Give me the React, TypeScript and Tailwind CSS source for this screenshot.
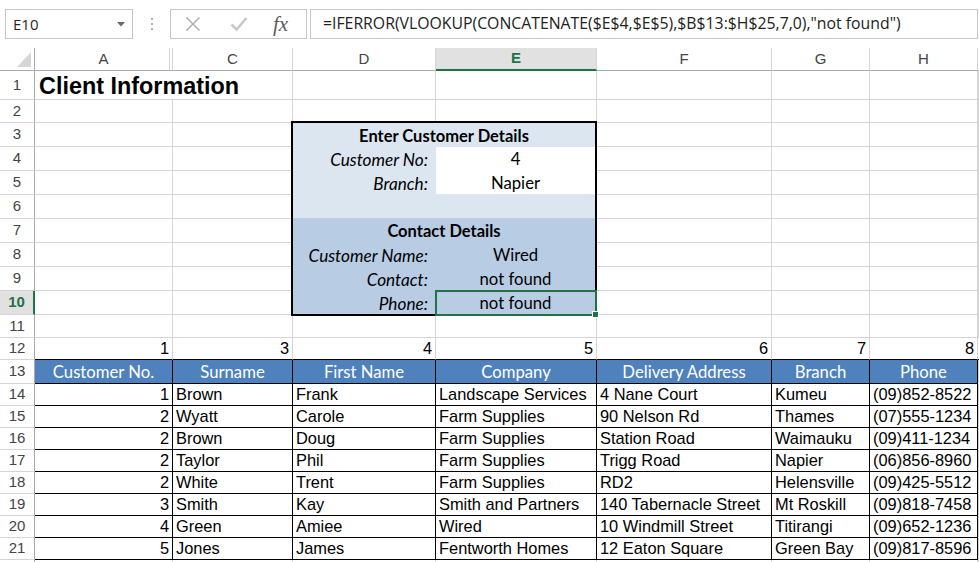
import React from "react";

const gridCell = "border-r border-b border-[#d4d4d4]";
const dataCell =
  "border-r border-b border-black flex items-center px-[3px] whitespace-nowrap overflow-hidden text-[16.4px] font-['Liberation_Sans',Arial,sans-serif]";
const numRowCell =
  "border-r border-b border-r-[#d4d4d4] border-b-black flex items-center justify-end pr-[3px] text-[16.4px] font-['Liberation_Sans',Arial,sans-serif]";
const headCell =
  "flex items-center justify-center border-r border-b border-r-[#d4d4d4] border-b-[#ababab] font-['Liberation_Sans',Arial,sans-serif] text-[15px] text-[#444]";

const customers: [number, string, string, string, string, string, string][] = [
  [1, "Brown", "Frank", "Landscape Services", "4 Nane Court", "Kumeu", "(09)852-8522"],
  [2, "Wyatt", "Carole", "Farm Supplies", "90 Nelson Rd", "Thames", "(07)555-1234"],
  [2, "Brown", "Doug", "Farm Supplies", "Station Road", "Waimauku", "(09)411-1234"],
  [2, "Taylor", "Phil", "Farm Supplies", "Trigg Road", "Napier", "(06)856-8960"],
  [2, "White", "Trent", "Farm Supplies", "RD2", "Helensville", "(09)425-5512"],
  [3, "Smith", "Kay", "Smith and Partners", "140 Tabernacle Street", "Mt Roskill", "(09)818-7458"],
  [4, "Green", "Amiee", "Wired", "10 Windmill Street", "Titirangi", "(09)652-1236"],
  [5, "Jones", "James", "Fentworth Homes", "12 Eaton Square", "Green Bay", "(09)817-8596"],
];

const tableHeads = ["Customer No.", "Surname", "First Name", "Company", "Delivery Address", "Branch", "Phone"];

function RowHead({ n, active }: { n?: number; active?: boolean }) {
  if (active) {
    return (
      <div className="flex items-center justify-center border-b border-b-[#d4d4d4] border-r-2 border-r-[#217346] bg-[#e1e1e1] font-['Liberation_Sans',Arial,sans-serif] text-[15px] font-bold text-[#217346]">
        {n}
      </div>
    );
  }
  return (
    <div className="flex items-center justify-center border-r border-b border-r-[#ababab] border-b-[#d4d4d4] font-['Liberation_Sans',Arial,sans-serif] text-[15px] text-[#444]">
      {n}
    </div>
  );
}

function FormulaBar() {
  return (
    <div className="flex h-[48px] items-start pl-[5px] pt-[9px]">
      <div className="flex h-[30px] w-[128px] items-center border border-[#c6c6c6] pl-[7px] pr-[7px] font-['Open_Sans',sans-serif] text-[15px] text-[#262626]">
        <span className="flex-1">E10</span>
        <svg width="8" height="5" viewBox="0 0 8 5">
          <polygon points="0,0 8,0 4,4.5" fill="#6a6a6a" />
        </svg>
      </div>
      <div className="flex h-[30px] w-[37px] flex-col items-center justify-center gap-[3px]">
        <div className="h-[2px] w-[2px] bg-[#b0b0b0]" />
        <div className="h-[2px] w-[2px] bg-[#b0b0b0]" />
        <div className="h-[2px] w-[2px] bg-[#b0b0b0]" />
      </div>
      <div className="flex h-[30px] w-[137px] items-center border border-[#c6c6c6] pl-[14px]">
        <svg width="16" height="16" viewBox="0 0 16 16">
          <path d="M1.5 1.5 L14.5 14.5 M14.5 1.5 L1.5 14.5" stroke="#b1b1b1" strokeWidth="1.6" fill="none" />
        </svg>
        <svg className="ml-[29px]" width="18" height="16" viewBox="0 0 18 16">
          <path d="M1.5 8.5 L6.5 13.5 L16.5 2" stroke="#c9c9c9" strokeWidth="2.6" fill="none" />
        </svg>
        <span className="ml-[25px] font-['Liberation_Serif',serif] text-[21px] italic leading-none text-[#5b5b5b]">
          fx
        </span>
      </div>
      <div className="ml-[3px] flex h-[30px] w-[668px] items-center border border-[#c6c6c6] pl-[12px] font-['Open_Sans',sans-serif] text-[15.8px] text-[#222]">
        =IFERROR(VLOOKUP(CONCATENATE($E$4,$E$5),$B$13:$H$25,7,0),"not found")
      </div>
    </div>
  );
}

function DetailsBox() {
  const label = "flex items-center justify-end pr-[8px] pt-[3px] italic text-[17.2px]";
  const value = "flex items-center justify-center pt-[3px] text-[16.7px]";
  return (
    <div className="relative z-10 row-span-8 col-span-2 -mb-[1px] -ml-[2px] -mt-[2px] grid grid-cols-[143px_1fr] grid-rows-[24px_23px_24px_24px_24px_24px_24px_24px] border-2 border-black font-['Lato',sans-serif] text-black">
      <div className="col-span-2 flex items-center justify-center bg-[#dce6f1] pt-[2px] text-[16.5px] font-bold">
        Enter Customer Details
      </div>
      <div className={`${label} bg-[#dce6f1]`}>Customer No:</div>
      <div className={`${value} bg-white`}>4</div>
      <div className={`${label} bg-[#dce6f1]`}>Branch:</div>
      <div className={`${value} bg-white`}>Napier</div>
      <div className="col-span-2 bg-[#dce6f1]" />
      <div className="col-span-2 flex items-center justify-center bg-[#b8cce4] pt-[3px] text-[16.5px] font-bold">
        Contact Details
      </div>
      <div className={`${label} bg-[#b8cce4]`}>Customer Name:</div>
      <div className={`${value} bg-[#b8cce4]`}>Wired</div>
      <div className={`${label} bg-[#b8cce4]`}>Contact:</div>
      <div className={`${value} bg-[#b8cce4]`}>not found</div>
      <div className={`${label} bg-[#b8cce4]`}>Phone:</div>
      <div className={`${value} relative bg-[#b8cce4]`}>
        not found
        <div className="absolute -bottom-[2px] -left-[1px] -right-[2px] top-0 border-2 border-[#217346]">
          <div className="absolute -bottom-[4px] -right-[4px] h-[7px] w-[7px] border border-white bg-[#217346]" />
        </div>
      </div>
    </div>
  );
}

function Sheet() {
  const plain = (n: number, skipDE = false, active = false, label = true) => (
    <React.Fragment key={n}>
      <RowHead n={label ? n : undefined} active={active} />
      <div className={gridCell} />
      <div className={gridCell} />
      {!skipDE && <div className={gridCell} />}
      {!skipDE && <div className={gridCell} />}
      <div className={gridCell} />
      <div className={gridCell} />
      <div className={gridCell} />
      <div className={gridCell} />
    </React.Fragment>
  );

  return (
    <div className="grid grid-cols-[35px_138px_120px_143px_161px_175px_98px_108px_1fr] grid-rows-[23px_29px_23px_repeat(8,24px)_23px_22px_24px_repeat(8,22px)_24px] text-black">
      {/* column headings */}
      <div className="relative border-r border-b border-r-[#ababab] border-b-[#ababab]">
        <svg className="absolute left-0 top-0" width="34" height="22" viewBox="0 0 34 22">
          <polygon points="31,4 31,19 17,19" fill="#d6d6d6" />
        </svg>
      </div>
      <div className={`${headCell} relative`}>
        A
        <div className="absolute bottom-0 right-[2px] top-0 w-px bg-[#d4d4d4]" />
      </div>
      <div className={headCell}>C</div>
      <div className={headCell}>D</div>
      <div className="flex items-center justify-center border-r border-b-2 border-r-[#d4d4d4] border-b-[#217346] bg-[#e1e1e1] font-['Liberation_Sans',Arial,sans-serif] text-[15px] font-bold text-[#217346]">
        E
      </div>
      <div className={headCell}>F</div>
      <div className={headCell}>G</div>
      <div className={headCell}>H</div>
      <div className="border-b border-b-[#ababab]" />

      {/* row 1: title overflowing across A and C */}
      <RowHead n={1} />
      <div className={`${gridCell} col-span-2 flex items-center whitespace-nowrap pl-[4px] pt-[4px] font-['Liberation_Sans',Arial,sans-serif] text-[23.4px] font-bold`}>
        Client Information
      </div>
      <div className={gridCell} />
      <div className={gridCell} />
      <div className={gridCell} />
      <div className={gridCell} />
      <div className={gridCell} />
      <div className={gridCell} />

      {plain(2)}

      {/* row 3 with the customer details block */}
      <RowHead n={3} />
      <div className={gridCell} />
      <div className={gridCell} />
      <DetailsBox />
      <div className={gridCell} />
      <div className={gridCell} />
      <div className={gridCell} />
      <div className={gridCell} />

      {plain(4, true)}
      {plain(5, true)}
      {plain(6, true)}
      {plain(7, true)}
      {plain(8, true)}
      {plain(9, true)}
      {plain(10, true, true)}
      {plain(11)}

      {/* row 12: column index numbers */}
      <RowHead n={12} />
      {[1, 3, 4, 5, 6, 7, 8].map((v) => (
        <div key={v} className={numRowCell}>
          {v}
        </div>
      ))}
      <div className="border-b border-black" />

      {/* row 13: table headings */}
      <RowHead n={13} />
      {tableHeads.map((h) => (
        <div
          key={h}
          className="flex items-center justify-center whitespace-nowrap border-r border-b border-black bg-[#4f81bd] pt-[3px] font-['Lato',sans-serif] text-[16.7px] text-white"
        >
          {h}
        </div>
      ))}
      <div className={gridCell} />

      {/* rows 14-21: customer records */}
      {customers.map((c, i) => (
        <React.Fragment key={i}>
          <RowHead n={14 + i} />
          <div className={`${dataCell} justify-end`}>{c[0]}</div>
          {c.slice(1).map((v, j) => (
            <div key={j} className={dataCell}>
              {v}
            </div>
          ))}
          <div className={gridCell} />
        </React.Fragment>
      ))}

      {plain(22, false, false, false)}
    </div>
  );
}

export default function App() {
  return (
    <div className="h-[562px] w-[979px] overflow-hidden bg-white">
      <FormulaBar />
      <Sheet />
    </div>
  );
}
